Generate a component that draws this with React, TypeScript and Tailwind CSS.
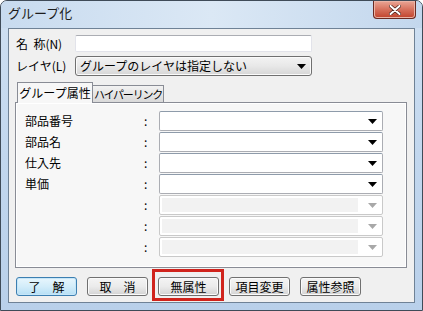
const font = { fontFamily: '"Noto Sans CJK JP", "Noto Sans", sans-serif' };

function Arrow({ disabled }: { disabled?: boolean }) {
  return (
    <svg width="9" height="5" viewBox="0 0 9 5" className="shrink-0">
      <path d="M0 0h9L4.5 5z" fill={disabled ? '#a8a8a8' : '#000'} />
    </svg>
  );
}

function Combo({ disabled }: { disabled?: boolean }) {
  if (disabled) {
    return (
      <div className="flex h-[20px] w-[224px] items-center rounded-[2px] border border-[#c9c9c9] bg-white pl-[2px] pr-[5px]">
        <div className="h-[14px] flex-1 bg-[#f2f2f2]" />
        <div className="ml-[10px]">
          <Arrow disabled />
        </div>
      </div>
    );
  }
  return (
    <div className="flex h-[20px] w-[224px] items-center justify-end rounded-[2px] border border-[#abadb3] border-t-[#8e9baa] bg-white pr-[5px]">
      <Arrow />
    </div>
  );
}

function Btn({ label, primary }: { label: string; primary?: boolean }) {
  return (
    <div
      className={
        'flex h-[19px] w-[61px] items-center justify-center whitespace-nowrap rounded-[3px] border text-[12px] leading-none text-black ' +
        (primary
          ? 'border-[#3c7fb1] bg-gradient-to-b from-[#e8f6fd] via-[#d3edfa] to-[#b6dff5] shadow-[inset_0_0_0_1px_#c6e6f8]'
          : 'border-[#707070] bg-gradient-to-b from-[#f4f4f4] via-[#ebebeb] to-[#d3d3d3] shadow-[inset_0_0_0_1px_#fafafa]')
      }
    >
      {label}
    </div>
  );
}

const rows = ['部品番号', '部品名', '仕入先', '単価', '', '', ''];

export default function App() {
  return (
    <div
      style={font}
      className="flex h-[311px] w-[423px] flex-col overflow-hidden rounded-t-[7px] border border-[#3f4b58] bg-gradient-to-b from-[#cfe0f2] via-[#c2d7ee] to-[#b9d0ea] text-[12px] text-black"
    >
      {/* title bar */}
      <div className="flex h-[27px] shrink-0 items-start justify-between bg-gradient-to-r from-[#c8dbef] via-[#dbe8f5] to-[#c3d7ed] pl-[7px] pr-[6px]">
        <span className="mt-[5px] text-[13px] leading-none text-[#1c1c1c]">グループ化</span>
        <div className="flex h-[18px] w-[43px] items-center justify-center rounded-b-[4px] border border-t-0 border-[#6a2a22] bg-gradient-to-b from-[#e9a696] via-[#d6705c] to-[#c0412b] shadow-[inset_0_0_0_1px_#eab3a5]">
          <svg width="12" height="10" viewBox="0 0 12 10">
            <path d="M1.5 1l9 8M10.5 1l-9 8" stroke="#4a2019" strokeWidth="3.4" strokeLinecap="round" />
            <path d="M1.5 1l9 8M10.5 1l-9 8" stroke="#fff" strokeWidth="2" strokeLinecap="round" />
          </svg>
        </div>
      </div>

      {/* client area */}
      <div className="mx-[7px] flex flex-1 flex-col border border-[#6f8296] bg-[#f0f0f0] pl-[6px] pt-[6px]">
        <div className="flex items-center">
          <span className="w-[60px] pl-[1px] leading-none">名&nbsp;&nbsp;称(N)</span>
          <div className="h-[17px] w-[237px] rounded-[2px] border border-[#e2e3ea] border-t-[#abadb3] bg-white" />
        </div>
        <div className="mt-[4px] flex items-center">
          <span className="w-[60px] pl-[1px] leading-none">レイヤ(L)</span>
          <div className="flex h-[20px] w-[237px] items-center justify-between rounded-[3px] border border-[#707070] bg-gradient-to-b from-[#f3f3f3] via-[#e8e8e8] to-[#d6d6d6] pl-[4px] pr-[5px] shadow-[inset_0_0_0_1px_#fbfbfb]">
            <span className="leading-none">グループのレイヤは指定しない</span>
            <Arrow />
          </div>
        </div>

        {/* tabs */}
        <div className="mt-[6px] flex items-end pl-[2px]">
          <div className="relative z-10 -mb-px flex h-[21px] w-[76px] items-center justify-center whitespace-nowrap border border-b-0 border-[#898c95] bg-[#f7f7f7] leading-none">
            グループ属性
          </div>
          <div className="flex h-[17px] w-[71px] items-center justify-center whitespace-nowrap border border-b-0 border-l-0 border-[#898c95] bg-gradient-to-b from-[#f2f2f2] to-[#d9d9d9] text-[11px] leading-none tracking-[-1.2px]">
            ハイパーリンク
          </div>
        </div>
        <div className="flex h-[166px] w-[392px] flex-col gap-[1px] border border-[#898c95] bg-[#f7f7f7] pl-[9px] pt-[8px] shadow-[inset_0_0_0_1px_#ffffff]">
          {rows.map((r, i) => (
            <div key={i} className="flex h-[20px] items-center">
              <span className="w-[119px] leading-none">{r}</span>
              <span className="w-[15px] leading-none">:</span>
              <Combo disabled={i >= 4} />
            </div>
          ))}
        </div>

        {/* buttons */}
        <div className="mt-[9px] flex items-center gap-[10px] pl-[1px]">
          <Btn label="了　解" primary />
          <Btn label="取　消" />
          <div className="relative">
            <Btn label="無属性" />
            <div className="pointer-events-none absolute -bottom-[5px] -left-[6px] -right-[5px] -top-[8px] border-[3px] border-[#d0231c]" />
          </div>
          <Btn label="項目変更" />
          <Btn label="属性参照" />
        </div>
      </div>
      <div className="h-[7px] shrink-0" />
    </div>
  );
}
